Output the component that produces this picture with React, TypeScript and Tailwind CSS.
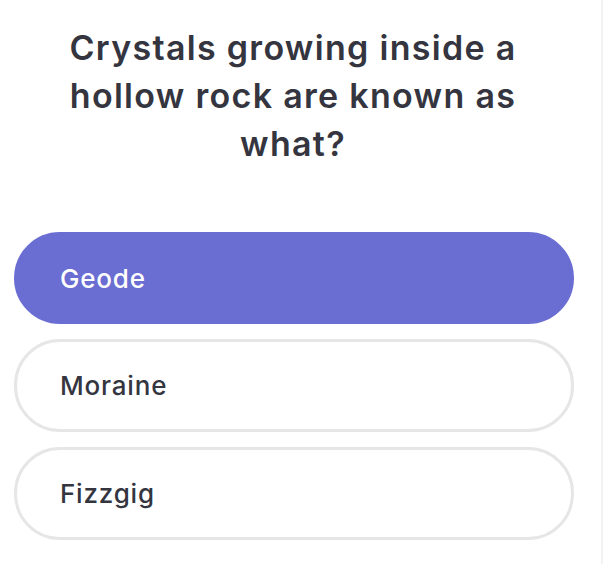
const options = [
  { label: 'Geode', selected: true },
  { label: 'Moraine', selected: false },
  { label: 'Fizzgig', selected: false },
]

export default function App() {
  return (
    <div
      className="h-[564px] w-[603px] overflow-hidden border-r-2 border-[#f2f2f2] bg-white"
      style={{ fontFamily: 'Inter, "Noto Sans", sans-serif' }}
    >
      <h1 className="ml-[43px] mt-[24px] w-[500px] text-center text-[34px] font-semibold leading-[48px] tracking-[1.3px] text-[#34353f]">
        Crystals growing inside a hollow rock are known as what?
      </h1>
      <div className="mt-[64px] flex flex-col gap-[15px] pl-[14px]">
        {options.map((o) => (
          <button
            key={o.label}
            className={
              o.selected
                ? 'flex h-[92px] w-[560px] items-center rounded-[46px] border-[3px] border-[#6a6dd2] bg-[#6a6dd2] pl-[43px] text-left text-[26px] font-medium tracking-[0.8px] text-white'
                : 'flex h-[93px] w-[560px] items-center rounded-[46px] border-[3px] border-[#e6e6e6] bg-white pl-[43px] text-left text-[26px] font-medium tracking-[0.8px] text-[#34353f]'
            }
          >
            {o.label}
          </button>
        ))}
      </div>
    </div>
  )
}
